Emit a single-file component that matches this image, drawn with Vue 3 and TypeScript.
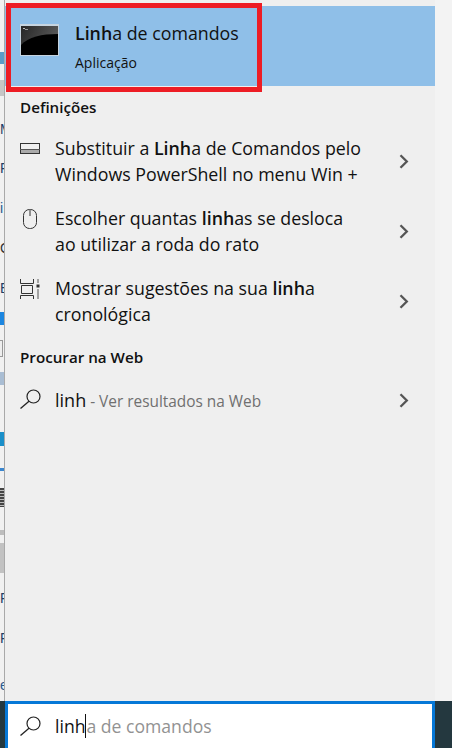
<script setup lang="ts">
interface Part { t: string; b?: boolean }
interface Row { icon: string; lines: Part[][] }
const rows: Row[] = [
  { icon: 'bar', lines: [[{ t: 'Substituir a ' }, { t: 'Linh', b: true }, { t: 'a de Comandos pelo' }], [{ t: 'Windows PowerShell no menu Win +' }]] },
  { icon: 'mouse', lines: [[{ t: 'Escolher quantas ' }, { t: 'linh', b: true }, { t: 'as se desloca' }], [{ t: 'ao utilizar a roda do rato' }]] },
  { icon: 'timeline', lines: [[{ t: 'Mostrar sugestões na sua ' }, { t: 'linh', b: true }, { t: 'a' }], [{ t: 'cronológica' }]] },
]
const letters = [
  { t: 'M', top: 121, c: '#1f3f66' },
  { t: 'F', top: 160, c: '#1f3f66' },
  { t: 'i', top: 200, c: '#2a5a90' },
  { t: 'C', top: 240, c: '#333' },
  { t: 'E', top: 280, c: '#1f3f66' },
  { t: 'F', top: 590, c: '#1f3f66' },
  { t: 'F', top: 630, c: '#1f3f66' },
  { t: 'e', top: 677, c: '#2a5a90' },
]
const blocks = ['b1', 'b2', 'b3', 'b4', 'b5', 'b6', 'b7', 'b8', 'b9', 'b10']
</script>

<template>
  <div class="root">
    <div class="main">
      <aside class="desk">
        <span v-for="b in blocks" :key="b" class="blk" :class="b"></span>
        <span v-for="l in letters" :key="l.top" class="ltr" :style="{ top: l.top + 'px', color: l.c }">{{ l.t }}</span>
      </aside>
      <section class="panel">
        <div class="best">
          <svg class="cmd" width="39" height="32" viewBox="0 0 39 32">
            <defs>
              <linearGradient id="cmdg" x1="0" y1="0" x2="1" y2="0.4">
                <stop offset="0" stop-color="#262626" />
                <stop offset="1" stop-color="#5a5a5a" />
              </linearGradient>
            </defs>
            <rect x="0" y="0" width="39" height="32" fill="#c6d4e0" />
            <rect x="1" y="2" width="37" height="29" fill="url(#cmdg)" />
            <path d="M1 21C8 13 22 10 38 10V31H1Z" fill="#000" />
            <rect x="3" y="4" width="2" height="1" fill="#bbb" />
            <rect x="5" y="5" width="3" height="1" fill="#999" />
          </svg>
          <div class="best-text">
            <div class="best-title"><b>Linh</b>a de comandos</div>
            <div class="best-sub">Aplicação</div>
          </div>
        </div>
        <h2 class="head first">Definições</h2>
        <div v-for="r in rows" :key="r.icon" class="row">
          <span class="ico" :class="'ico-' + r.icon">
            <svg v-if="r.icon === 'bar'" width="20" height="20" viewBox="0 0 20 20">
              <rect x="0.5" y="3.5" width="19" height="10" fill="none" stroke="#333" />
              <rect x="1" y="10" width="18" height="3" fill="#aaa" />
              <line x1="0" y1="9.5" x2="20" y2="9.5" stroke="#555" />
            </svg>
            <svg v-else-if="r.icon === 'mouse'" width="20" height="20" viewBox="0 0 20 20">
              <rect x="3.5" y="0.5" width="13" height="19" rx="6" fill="none" stroke="#333" />
              <line x1="10" y1="1" x2="10" y2="7" stroke="#333" />
            </svg>
            <svg v-else width="20" height="20" viewBox="0 0 20 20">
              <path d="M0.5 -1V3.5H13.5V-1M1.5 5.5H12.5V13.5H1.5ZM0.5 19V15.5H13.5V19" fill="none" stroke="#333" />
              <rect x="16.5" y="4.5" width="3" height="3" fill="#333" />
              <path d="M18 -1V3M18 9V19" fill="none" stroke="#555" />
            </svg>
          </span>
          <div class="row-text">
            <div v-for="(line, i) in r.lines" :key="i" class="line">
              <template v-for="(p, j) in line" :key="j"><b v-if="p.b">{{ p.t }}</b><span v-else>{{ p.t }}</span></template>
            </div>
          </div>
          <svg class="chev" width="11" height="15" viewBox="0 0 11 15"><path d="M1.5 1.2L7.8 7.5L1.5 13.8" fill="none" stroke="#555" stroke-width="2.3" /></svg>
        </div>
        <h2 class="head web">Procurar na Web</h2>
        <div class="row web-row">
          <span class="ico">
            <svg width="21" height="20" viewBox="0 0 21 20"><circle cx="13.5" cy="7.5" r="6.5" fill="none" stroke="#222" stroke-width="1.2" /><line x1="9" y1="12.2" x2="0.5" y2="19.5" stroke="#222" stroke-width="1.3" /></svg>
          </span>
          <div class="row-text web-text"><span class="q">linh</span><span class="hint"> - Ver resultados na Web</span></div>
          <svg class="chev" width="11" height="15" viewBox="0 0 11 15"><path d="M1.5 1.2L7.8 7.5L1.5 13.8" fill="none" stroke="#555" stroke-width="2.3" /></svg>
        </div>
      </section>
      <div class="gutter"></div>
    </div>
    <footer class="bottom">
      <div class="search">
        <span class="ico">
          <svg width="21" height="20" viewBox="0 0 21 20"><circle cx="13.5" cy="7.5" r="6.5" fill="none" stroke="#222" stroke-width="1.2" /><line x1="9" y1="12.2" x2="0.5" y2="19.5" stroke="#222" stroke-width="1.3" /></svg>
        </span>
        <span class="typed">linh</span><span class="caret"></span><span class="ghost">a de comandos</span>
      </div>
    </footer>
    <div class="annot"></div>
  </div>
</template>

<style>
html, body { margin: 0; padding: 0; background: #f3f3f3; }
</style>

<style scoped>
.root {
  position: relative;
  width: 452px;
  height: 748px;
  overflow: hidden;
  display: flex;
  flex-direction: column;
  font-family: "Open Sans", "Noto Sans", sans-serif;
  color: #111;
  background: #f3f3f3;
}
.main { flex: 1; display: flex; min-height: 0; }
.desk {
  position: relative;
  width: 4px;
  overflow: hidden;
  background: #f1f1f1;
  border-right: 1px solid #a9a9a9;
  flex: none;
}
.ltr { position: absolute; left: 0; font-size: 14px; line-height: 16px; font-family: "Liberation Sans", sans-serif; }
.blk { position: absolute; left: 0; width: 4px; }
.b1 { top: 52px; height: 12px; background: #5a9cc8; }
.b2 { top: 80px; height: 16px; background: #c6c6c6; }
.b3 { top: 312px; height: 13px; background: #1c86e0; }
.b4 { top: 340px; height: 17px; border: 1px solid #999; border-left: 0; width: 3px; background: #eee; box-sizing: border-box; }
.b5 { top: 372px; height: 13px; background: #a9bdd3; }
.b6 { top: 432px; height: 14px; background: #1a8fc9; }
.b7 { top: 468px; height: 3px; background: #3a86cf; }
.b8 { top: 488px; height: 19px; background: repeating-linear-gradient(#444 0 2px, #bbb 2px 3px); }
.b9 { top: 543px; height: 30px; background: #c2c2c2; }
.b10 { top: 530px; height: 5px; background: #bdbdbd; }
.panel { width: 430px; flex: none; background: #efefef; padding-top: 6px; box-sizing: border-box; }
.gutter { flex: 1; background: #f3f3f3; }
.best { height: 80px; background: #8fbfe8; display: flex; align-items: flex-start; }
.cmd { display: block; margin: 18px 0 0 15px; flex: none; }
.best-text { margin-left: 16px; }
.best-title { font-size: 17.8px; line-height: 22px; margin-top: 16px; color: #111; white-space: nowrap; }
.best-title b { font-weight: 600; }
.best-sub { font-size: 14px; line-height: 20px; margin-top: 9px; }
.head { margin: 0; font-size: 15.2px; font-weight: 600; line-height: 18px; padding-left: 15px; color: #111; }
.first { padding-top: 12px; }
.row { display: flex; align-items: flex-start; padding-left: 15px; height: 70px; }
.ico { width: 20px; height: 20px; flex: none; display: block; }
.ico svg { display: block; overflow: visible; }
.row .ico { margin-top: 4px; }
.row .ico-mouse { margin-top: 3px; }
.row-text { margin-left: 15px; width: 336px; flex: none; font-size: 17.8px; }
.line { line-height: 25.5px; white-space: nowrap; }
.line b { font-weight: 600; }
.chev { flex: none; margin-left: 8px; margin-top: 18px; }
.head + .row { margin-top: 20px; }
.web { margin-top: 2px; }
.web-row { height: 40px; margin-top: 22px !important; }
.web-row .ico { margin-top: 1px; }
.web-row .chev { margin-top: 5px; }
.web-text { line-height: 24px; white-space: nowrap; }
.q { font-size: 18px; }
.hint { font-size: 15.4px; color: #707070; }
.bottom { height: 47px; flex: none; background: #24383f; padding-left: 5px; }
.search {
  width: 430px;
  height: 47px;
  box-sizing: border-box;
  background: #fff;
  border: 3px solid #0678d7;
  border-bottom: 0;
  padding-left: 12px;
  display: flex;
  align-items: center;
  font-size: 17.6px;
}
.search .ico { margin-right: 15px; }
.typed { color: #111; }
.caret { width: 1px; height: 24px; background: #111; flex: none; }
.ghost { color: #929292; }
.annot {
  position: absolute;
  left: 6px;
  top: 3px;
  width: 256px;
  height: 89px;
  box-sizing: border-box;
  border: 5px solid #ed1c24;
  pointer-events: none;
}
</style>
